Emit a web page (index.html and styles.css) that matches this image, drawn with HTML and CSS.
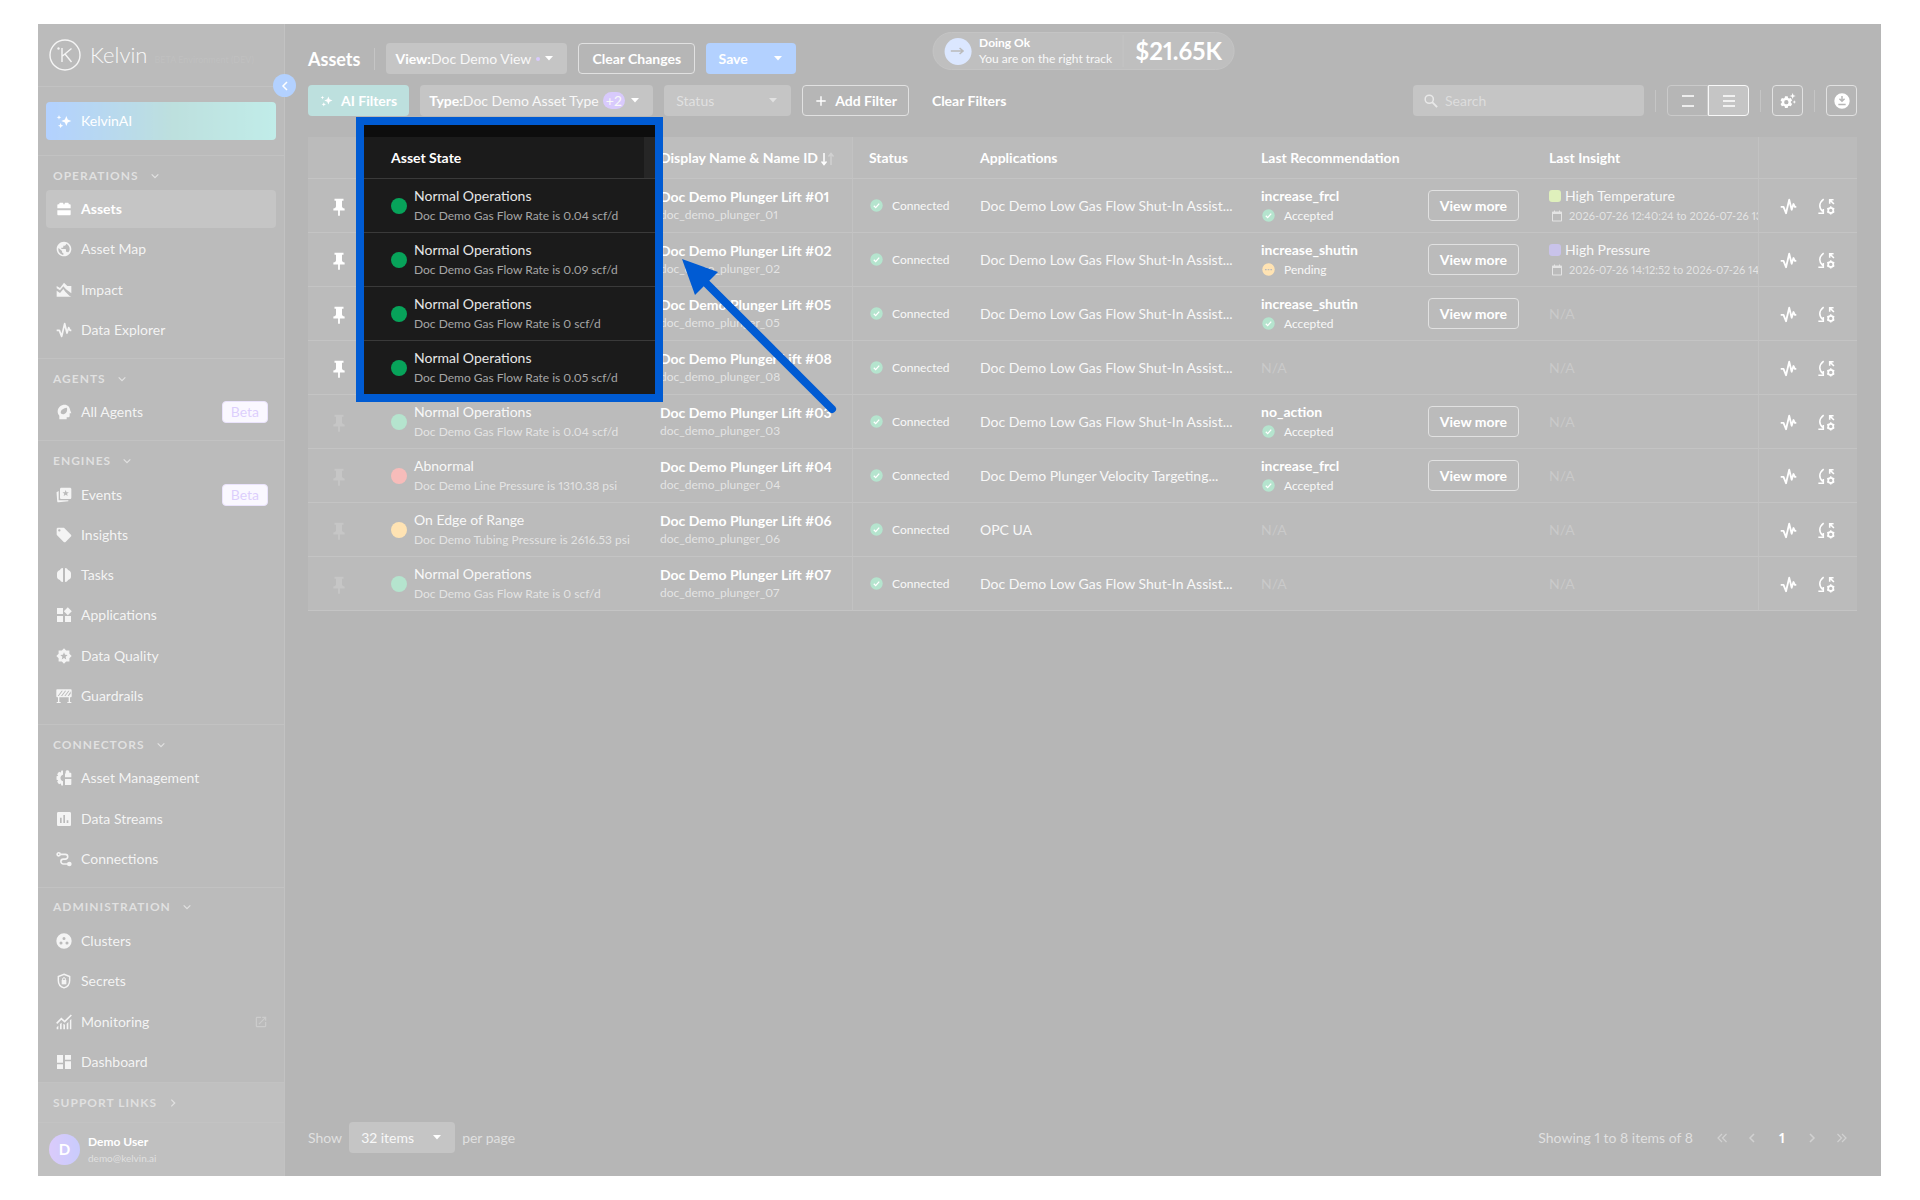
FILE: index.html
```html
<!DOCTYPE html>
<html lang="en">
<head>
    <meta charset="UTF-8">
    <meta name="viewport" content="width=device-width, initial-scale=1.0">
    <title>Kelvin - Assets</title>
    <link rel="stylesheet" href="styles.css">
</head>
<body>
    <svg class="sprite" aria-hidden="true">
        <symbol id="i-sparkle" viewBox="0 0 24 24"><path d="M15.500 4.500l2.100 5.400 5.400 2.100-5.400 2.100-2.100 5.400-2.100-5.400-5.400-2.100 5.400-2.100zM4.500 3l.9 2.600L8 6.500l-2.600.9L4.500 10l-.9-2.600L1 6.500l2.600-.9zM7 15l1.100 2.900L11 19l-2.900 1.100L7 23l-1.100-2.900L3 19l2.900-1.100z"/></symbol>
        <symbol id="i-assets" viewBox="0 0 24 24"><path d="M2 11V6.500C2 5.700 2.700 5 3.500 5H5V3.500c0-.6.400-1 1-1h4c.6 0 1 .4 1 1V5h2V3.500c0-.6.400-1 1-1h4c.6 0 1 .4 1 1V5h1.500c.8 0 1.500.7 1.500 1.500V11zM2 14h20v6c0 .8-.7 1.500-1.500 1.500h-17C2.700 21.500 2 20.800 2 20z"/></symbol>
        <symbol id="i-globe" viewBox="0 0 24 24"><path d="M12 1C5.900 1 1 5.900 1 12s4.900 11 11 11 11-4.900 11-11S18.100 1 12 1zm-1 19.930c-4-.49-7.500-3.850-7.500-8.500 0-.62.130-1.400.3-2L9 15v1c0 1.100.9 2 2 2v2.930zm7-3.540c-.26-.81-1-1.390-2-1.390h-1v-3c0-.55-.45-1-1-1H8v-2h2c.55 0 1-.45 1-1V7h2c1.100 0 2-.9 2-2v-.91c3.200 1.190 5.500 4.060 5.500 7.910 0 2.080-.9 4-2.500 5.390z"/></symbol>
        <symbol id="i-impact" viewBox="0 0 24 24"><path d="M1 6l5 3 6-8 5 5h6v11l-8-6-4-4.500-5 6-5-3z"/><path d="M1 13l5 3.500 5-6 3 4 6.500 6.500 2.500 1H1z"/></symbol>
        <symbol id="i-pulse" viewBox="0 0 24 24"><path d="M1 12.500h4l3.500 9L13 2.500l3.500 14 2.500-8 2 4h2" fill="none" stroke="currentColor" stroke-width="2.600" stroke-linejoin="round"/></symbol>
        <symbol id="i-agent" viewBox="0 0 24 24"><path fill-rule="evenodd" d="M13 1C7.500 1 3 5 2.500 10.500c-.2 3 .9 5.400 2.500 7.300V23h11v-3h2c1.500 0 2.500-1 2.500-2.500V14H23l-1.700-4.500C21 4.500 17.500 1 13 1zm3.500 4.500c.8 4.500-.5 8-4 9.500-2 .9-4 .2-5.200-1.200C6.500 10 9.500 6.500 16.500 5.500z"/></symbol>
        <symbol id="i-events" viewBox="0 0 24 24"><path fill-rule="evenodd" d="M8 1h13c1.100 0 2 .9 2 2v13c0 1.100-.9 2-2 2H8c-1.100 0-2-.9-2-2V3c0-1.100.9-2 2-2zm6.500 3.500l-1.300 3.300-3.500.2 2.700 2.200-.9 3.400 3-1.900 3 1.900-.9-3.400 2.700-2.200-3.500-.2z"/><path d="M4 6v13c0 .6.400 1 1 1h13.500v1.200L4 23c-1.200.1-2-.6-2.200-1.800L.8 8z"/></symbol>
        <symbol id="i-tag" viewBox="0 0 24 24"><path d="M22.400 11.500l-10-10C12 1.200 11.500 1 11 1H3c-1.100 0-2 .9-2 2v8c0 .5.200 1 .6 1.400l10 10c.8.8 2 .8 2.800 0l8-8c.8-.8.8-2.100 0-2.900zM5 6.800A1.800 1.800 0 1 1 5 3.200a1.800 1.800 0 0 1 0 3.600z"/></symbol>
        <symbol id="i-tasks" viewBox="0 0 24 24"><path d="M10.500 1.500v21C8 22.500 6.500 21 6 19.500c-2.500-.7-4.500-2.500-4.500-5V9.500c0-2.500 2-4.300 4.500-5 .5-1.700 2-3 4.500-3zM13.500 1.500v21c2.500 0 4-1.500 4.500-3 2.500-.7 4.500-2.500 4.500-5V9.500c0-2.500-2-4.300-4.500-5-.5-1.700-2-3-4.500-3z"/></symbol>
        <symbol id="i-apps" viewBox="0 0 24 24"><path d="M13.500 13.500v9h9v-9zM1.500 22.500h9v-9h-9zM1.500 1.500v9h9v-9zM17.700.5l-6 6 6 6 6-6z"/></symbol>
        <symbol id="i-quality" viewBox="0 0 24 24"><path fill-rule="evenodd" d="M12 .5l3.200 3.200h4.900v4.900l3.400 3.400-3.400 3.400v4.900h-4.900L12 23.500l-3.200-3.200H3.900v-4.900L.5 12l3.400-3.400V3.700h4.900zm0 6l-1.500 3.800-4 .3 3.100 2.600-1 3.900L12 15l3.400 2.100-1-3.900 3.100-2.600-4-.3z"/></symbol>
        <symbol id="i-guard" viewBox="0 0 24 24"><path fill-rule="evenodd" d="M2 2h20c.8 0 1.500.7 1.500 1.500v9c0 .8-.7 1.500-1.500 1.500h-1v7h2v1.500h-6V21h2v-7H5v7h2v1.500H1V21h2v-7H2c-.8 0-1.500-.7-1.500-1.500v-9C.5 2.700 1.200 2 2 2zm.5 10h1.700l6-8H8.500zm5 0h1.700l6-8h-1.700zm5 0h1.700l6-8h-1.700zm5 0h1.700l2.800-3.500V5z"/></symbol>
        <symbol id="i-mgmt" viewBox="0 0 24 24"><path fill-rule="evenodd" d="M10.500.8v6.400c-2.400.8-3.800 2.600-3.800 4.800s1.400 4 3.800 4.800v6.400H8l-.8-2.800-2.700 1-2.800-3.700 1.600-2.400L.8 14.600V9.400l2.500-.7-1.600-2.400 2.800-3.700 2.700 1L8 .8zM13.500 11V6c0-.6.400-1 1-1V3c0-1.500 1-2.500 2.500-2.500S20 1.500 20 3v1h1.500c.9 0 1.500.7 1.500 1.500V11zM13.500 13.500H23V21c0 .9-.6 1.500-1.500 1.500h-8z"/></symbol>
        <symbol id="i-streams" viewBox="0 0 24 24"><path d="M20.500 1.500h-17c-1.100 0-2 .9-2 2v17c0 1.100.9 2 2 2h17c1.100 0 2-.9 2-2v-17c0-1.100-.9-2-2-2zM8.500 18H6v-8h2.500zm5 0H11V6h2.500zm5 0H16v-4h2.500z"/></symbol>
        <symbol id="i-conn" viewBox="0 0 24 24"><g fill="none" stroke="currentColor" stroke-width="2.400"><circle cx="4" cy="5" r="2.300"/><path d="M6.500 5H14a3.500 3.500 0 0 1 0 7.200h-3a3.500 3.500 0 0 0 0 7.300h7"/></g><circle cx="20" cy="19.500" r="3.500"/></symbol>
        <symbol id="i-clusters" viewBox="0 0 24 24"><path fill-rule="evenodd" d="M12 .5a11.500 11.500 0 1 0 0 23 11.500 11.500 0 0 0 0-23zM12 6a2.300 2.300 0 1 1 0 4.600A2.300 2.300 0 0 1 12 6zm-4.500 6.800a2.300 2.300 0 1 1 0 4.600 2.300 2.300 0 0 1 0-4.600zm9 0a2.300 2.300 0 1 1 0 4.600 2.300 2.300 0 0 1 0-4.600z"/></symbol>
        <symbol id="i-secrets" viewBox="0 0 24 24"><path d="M12 1.800l8.500 3.500v6c0 5.200-3.600 9.700-8.500 11-4.900-1.300-8.500-5.800-8.500-11v-6z" fill="none" stroke="currentColor" stroke-width="2.200"/><path d="M8.500 10.500h7V17h-7z"/><path d="M10 11V9a2 2 0 0 1 4 0v2" fill="none" stroke="currentColor" stroke-width="1.500"/></symbol>
        <symbol id="i-monitor" viewBox="0 0 24 24"><path d="M1 14l7-7 5 4.500L23 1.500" fill="none" stroke="currentColor" stroke-width="2.400"/><path d="M1 20l2.500-2.500V23H1zM6 15l2.500-2v10H6zM11 14.500l2.500 1.500v7H11zM16 14.500l2.500-2.500v11H16zM20.800 9.500L23 7.500V23h-2.200z"/></symbol>
        <symbol id="i-dash" viewBox="0 0 24 24"><path d="M1.500 13h9V1.500h-9zM1.500 22.500h9V15.500h-9zM13.500 22.500h9V11h-9zM13.500 1.500v7h9v-7z"/></symbol>
        <symbol id="i-external" viewBox="0 0 24 24"><path d="M19 19H5V5h7V3H5a2 2 0 0 0-2 2v14a2 2 0 0 0 2 2h14c1.100 0 2-.9 2-2v-7h-2v7zM14 3v2h3.590l-9.830 9.830 1.410 1.410L19 6.410V10h2V3h-7z"/></symbol>
        <symbol id="i-down" viewBox="0 0 24 24"><path d="M4 8l8 8 8-8" fill="none" stroke="currentColor" stroke-width="3"/></symbol>
        <symbol id="i-right" viewBox="0 0 24 24"><path d="M8 4l8 8-8 8" fill="none" stroke="currentColor" stroke-width="3"/></symbol>
        <symbol id="i-left" viewBox="0 0 24 24"><path d="M16 4l-8 8 8 8" fill="none" stroke="currentColor" stroke-width="3"/></symbol>
        <symbol id="i-first" viewBox="0 0 24 24"><path d="M12 4l-8 8 8 8M21 4l-8 8 8 8" fill="none" stroke="currentColor" stroke-width="2.400"/></symbol>
        <symbol id="i-last" viewBox="0 0 24 24"><path d="M3 4l8 8-8 8M12 4l8 8-8 8" fill="none" stroke="currentColor" stroke-width="2.400"/></symbol>
        <symbol id="i-caret" viewBox="0 0 8 5"><path d="M0 0h8L4 4.500z"/></symbol>
        <symbol id="i-plus" viewBox="0 0 24 24"><path d="M12 4v16M4 12h16" fill="none" stroke="currentColor" stroke-width="2.400"/></symbol>
        <symbol id="i-search" viewBox="0 0 24 24"><circle cx="9" cy="9" r="7" fill="none" stroke="currentColor" stroke-width="2.600"/><path d="M14 14l8.500 8.500" stroke="currentColor" stroke-width="3.200"/></symbol>
        <symbol id="i-gear" viewBox="0 0 24 24"><path fill-rule="evenodd" d="M7.500 5h4l.6 2.500 1.600.9 2.500-.8 2 3.500-1.900 1.700v1.900l1.900 1.700-2 3.500-2.500-.8-1.600.9-.6 2.500h-4L6.900 20l-1.600-.9-2.500.8-2-3.500 1.900-1.700v-1.900L.8 11.100l2-3.500 2.500.8 1.600-.9zm2 5.500a3.200 3.200 0 1 0 0 6.500 3.200 3.200 0 0 0 0-6.500zM19 0l1.200 3.300L23.500 4.500l-3.300 1.200L19 9l-1.200-3.300-3.300-1.200 3.300-1.200zM21.500 11l.8 1.700 1.700.8-1.700.8-.8 1.700-.8-1.700-1.700-.8 1.700-.8z"/></symbol>
        <symbol id="i-download" viewBox="0 0 24 24"><path fill-rule="evenodd" d="M12 .5a11.500 11.500 0 1 0 0 23 11.500 11.500 0 0 0 0-23zM10.900 4.500h2.200v5.300l2-2 1.500 1.500L12 13.900 7.400 9.300l1.500-1.500 2 2zM6.500 16h11v2.200h-11z"/></symbol>
        <symbol id="i-pin" viewBox="0 0 16 24"><path d="M2 1h12v2.500h-2V11c0 1.500 1.200 2.500 3.500 3v2.500H9.200V23L8 24.500 6.800 23v-6.500H.5V14C2.800 13.500 4 12.500 4 11V3.500H2z"/></symbol>
        <symbol id="i-check" viewBox="0 0 24 24"><circle cx="12" cy="12" r="11.500"/><path d="M7 12.500l3.500 3.500L17 8.500" fill="none" stroke="#fff" stroke-width="2.400"/></symbol>
        <symbol id="i-pending" viewBox="0 0 24 24"><circle cx="12" cy="12" r="11.500"/><path d="M5.500 11h3v2.600h-3zM10.500 11h3v2.600h-3zM15.500 11h3v2.600h-3z" fill="#1b1b1b"/></symbol>
        <symbol id="i-calendar" viewBox="0 0 24 24"><path fill-rule="evenodd" d="M6 1v2H4c-1.100 0-2 .9-2 2v16c0 1.100.9 2 2 2h16c1.100 0 2-.9 2-2V5c0-1.100-.9-2-2-2h-2V1h-2v2H8V1zM4 8h16v13H4z"/></symbol>
        <symbol id="i-control" viewBox="0 0 24 24"><g fill="none" stroke="currentColor" stroke-width="2.200"><path d="M8 1.500C1 7 1 14 6.500 19M.5 21.500h7v-6M16.500 8V2.500H22M17 3l5.500 5.500"/><circle cx="18" cy="17.500" r="3.600" stroke-width="2.400"/><path d="M18 11.800v2M18 21.200v2M13 14.600l1.700 1M21.300 19.400l1.700 1M13 20.400l1.700-1M21.300 15.600l1.700-1"/></g></symbol>
    </svg>

    <div class="app">
        <aside class="sidebar">
            <div class="brand">
                <svg class="brand-mark" viewBox="0 0 32 32"><g fill="none" stroke="currentColor" stroke-width="1.400"><circle cx="16" cy="16" r="15"/><path d="M13 9v14M22.500 9.500L13.500 17M16 15l6.500 8"/></g><circle cx="9.500" cy="9.500" r="1.200" fill="currentColor"/></svg>
                <span class="brand-name">Kelvin</span>
                <span class="brand-env">BETA Environment (DEV)</span>
            </div>
            <div class="ai-box">
                <button class="ai-button"><svg class="icon"><use href="#i-sparkle"/></svg>KelvinAI</button>
            </div>
            <nav class="nav">
                <section class="nav-group">
                    <button class="nav-title">Operations<svg><use href="#i-down"/></svg></button>
                    <a class="nav-item active" href="#"><svg class="icon"><use href="#i-assets"/></svg>Assets</a>
                    <a class="nav-item" href="#"><svg class="icon"><use href="#i-globe"/></svg>Asset Map</a>
                    <a class="nav-item" href="#"><svg class="icon"><use href="#i-impact"/></svg>Impact</a>
                    <a class="nav-item" href="#"><svg class="icon"><use href="#i-pulse"/></svg>Data Explorer</a>
                </section>
                <section class="nav-group">
                    <button class="nav-title">Agents<svg><use href="#i-down"/></svg></button>
                    <a class="nav-item" href="#"><svg class="icon"><use href="#i-agent"/></svg>All Agents<span class="beta">Beta</span></a>
                </section>
                <section class="nav-group">
                    <button class="nav-title">Engines<svg><use href="#i-down"/></svg></button>
                    <a class="nav-item" href="#"><svg class="icon"><use href="#i-events"/></svg>Events<span class="beta">Beta</span></a>
                    <a class="nav-item" href="#"><svg class="icon"><use href="#i-tag"/></svg>Insights</a>
                    <a class="nav-item" href="#"><svg class="icon"><use href="#i-tasks"/></svg>Tasks</a>
                    <a class="nav-item" href="#"><svg class="icon"><use href="#i-apps"/></svg>Applications</a>
                    <a class="nav-item" href="#"><svg class="icon"><use href="#i-quality"/></svg>Data Quality</a>
                    <a class="nav-item" href="#"><svg class="icon"><use href="#i-guard"/></svg>Guardrails</a>
                </section>
                <section class="nav-group">
                    <button class="nav-title">Connectors<svg><use href="#i-down"/></svg></button>
                    <a class="nav-item" href="#"><svg class="icon"><use href="#i-mgmt"/></svg>Asset Management</a>
                    <a class="nav-item" href="#"><svg class="icon"><use href="#i-streams"/></svg>Data Streams</a>
                    <a class="nav-item" href="#"><svg class="icon"><use href="#i-conn"/></svg>Connections</a>
                </section>
                <section class="nav-group">
                    <button class="nav-title">Administration<svg><use href="#i-down"/></svg></button>
                    <a class="nav-item" href="#"><svg class="icon"><use href="#i-clusters"/></svg>Clusters</a>
                    <a class="nav-item" href="#"><svg class="icon"><use href="#i-secrets"/></svg>Secrets</a>
                    <a class="nav-item" href="#"><svg class="icon"><use href="#i-monitor"/></svg>Monitoring<svg class="external"><use href="#i-external"/></svg></a>
                    <a class="nav-item" href="#"><svg class="icon"><use href="#i-dash"/></svg>Dashboard</a>
                </section>
            </nav>
            <button class="support">Support Links<svg><use href="#i-right"/></svg></button>
            <div class="user">
                <span class="avatar">D</span>
                <div>
                    <div class="user-name">Demo User</div>
                    <div class="user-mail">demo@kelvin.ai</div>
                </div>
            </div>
            <button class="collapse" aria-label="Collapse sidebar"><svg><use href="#i-left"/></svg></button>
        </aside>

        <main class="main">
            <header class="bar">
                <h1>Assets</h1>
                <span class="divider"></span>
                <div class="field view-field">
                    <label for="view">View:</label>
                    <select id="view"><option>Doc Demo View</option></select>
                    <span class="unsaved"></span>
                    <svg class="caret"><use href="#i-caret"/></svg>
                </div>
                <button class="btn">Clear Changes</button>
                <div class="save">
                    <button>Save</button>
                    <button aria-label="More save options"><svg class="caret"><use href="#i-caret"/></svg></button>
                </div>
            </header>

            <div class="bar filters">
                <button class="ai-filters"><svg class="icon"><use href="#i-sparkle"/></svg>AI Filters</button>
                <div class="field type-field">
                    <label for="type">Type:</label>
                    <select id="type"><option>Doc Demo Asset Type</option></select>
                    <span class="count">+2</span>
                    <svg class="caret"><use href="#i-caret"/></svg>
                </div>
                <div class="field status-field">
                    <select aria-label="Status"><option>Status</option></select>
                    <svg class="caret"><use href="#i-caret"/></svg>
                </div>
                <button class="btn add-filter"><svg><use href="#i-plus"/></svg>Add Filter</button>
                <button class="clear-filters">Clear Filters</button>
                <div class="search">
                    <svg><use href="#i-search"/></svg>
                    <input type="search" placeholder="Search" aria-label="Search">
                </div>
                <span class="divider"></span>
                <div class="density">
                    <button aria-label="Comfortable rows"><svg viewBox="0 0 12 12"><path d="M0 1h12M0 11h12"/></svg></button>
                    <button class="on" aria-label="Compact rows"><svg viewBox="0 0 12 12"><path d="M0 1h12M0 6h12M0 11h12"/></svg></button>
                </div>
                <span class="divider"></span>
                <button class="btn square" aria-label="Table settings"><svg class="icon"><use href="#i-gear"/></svg></button>
                <span class="divider"></span>
                <button class="btn square" aria-label="Download"><svg class="icon"><use href="#i-download"/></svg></button>
            </div>

            <table class="assets">
                <colgroup>
                    <col class="c-pin"><col class="c-state"><col class="c-name"><col class="c-status">
                    <col class="c-apps"><col class="c-rec"><col class="c-insight"><col class="c-actions">
                </colgroup>
                <thead>
                    <tr>
                        <th></th>
                        <th>Asset State</th>
                        <th class="sorted">Display Name &amp; Name ID <svg viewBox="0 0 14 14"><path d="M3 1v11M.5 9.500L3 12.500l2.500-3"/><path class="dim" d="M10 13V2M7.500 4.500L10 1.500l2.500 3"/></svg></th>
                        <th>Status</th>
                        <th>Applications</th>
                        <th>Last Recommendation</th>
                        <th>Last Insight</th>
                        <th class="actions"></th>
                    </tr>
                </thead>
                <tbody id="rows"></tbody>
            </table>

            <footer class="pager">
                <label for="size">Show</label>
                <div class="field size-field">
                    <select id="size"><option>32 items</option></select>
                    <svg class="caret"><use href="#i-caret"/></svg>
                </div>
                <span>per page</span>
                <span class="range">Showing 1 to 8 items of 8</span>
                <div class="pages">
                    <button aria-label="First page"><svg><use href="#i-first"/></svg></button>
                    <button aria-label="Previous page"><svg><use href="#i-left"/></svg></button>
                    <button class="current">1</button>
                    <button aria-label="Next page"><svg><use href="#i-right"/></svg></button>
                    <button aria-label="Last page"><svg><use href="#i-last"/></svg></button>
                </div>
            </footer>
        </main>

        <div class="score">
            <span class="score-icon"><svg viewBox="0 0 14 8"><path d="M0 4h12M9 1l3.500 3L9 7"/></svg></span>
            <div class="score-text">
                <strong>Doing Ok</strong>
                <span>You are on the right track</span>
            </div>
            <span class="score-value">$21.65K</span>
        </div>

        <!-- dims everything except the Asset State column -->
        <div class="spotlight"></div>
        <svg class="pointer" viewBox="0 0 160 160"><path d="M152 152L24 24" stroke="#005bd3" stroke-width="8" stroke-linecap="round"/><path d="M2 2l36 13-23 23z" fill="#005bd3"/></svg>
    </div>

    <script>
        const lowGas = 'Doc Demo Low Gas Flow Shut-In Assist...';
        const assets = [
            { id: '01', pinned: true, color: 'green', state: 'Normal Operations', detail: 'Doc Demo Gas Flow Rate is 0.04 scf/d', app: lowGas, rec: 'increase_frcl', recState: 'Accepted', insight: 'High Temperature', tone: 'lime', time: '2026-07-26 12:40:24 to 2026-07-26 13:40:24' },
            { id: '02', pinned: true, color: 'green', state: 'Normal Operations', detail: 'Doc Demo Gas Flow Rate is 0.09 scf/d', app: lowGas, rec: 'increase_shutin', recState: 'Pending', insight: 'High Pressure', tone: 'violet', time: '2026-07-26 14:12:52 to 2026-07-26 14:42:52' },
            { id: '05', pinned: true, color: 'green', state: 'Normal Operations', detail: 'Doc Demo Gas Flow Rate is 0 scf/d', app: lowGas, rec: 'increase_shutin', recState: 'Accepted' },
            { id: '08', pinned: true, color: 'green', state: 'Normal Operations', detail: 'Doc Demo Gas Flow Rate is 0.05 scf/d', app: lowGas },
            { id: '03', color: 'green', state: 'Normal Operations', detail: 'Doc Demo Gas Flow Rate is 0.04 scf/d', app: lowGas, rec: 'no_action', recState: 'Accepted' },
            { id: '04', color: 'red', state: 'Abnormal', detail: 'Doc Demo Line Pressure is 1310.38 psi', app: 'Doc Demo Plunger Velocity Targeting...', rec: 'increase_frcl', recState: 'Accepted' },
            { id: '06', color: 'amber', state: 'On Edge of Range', detail: 'Doc Demo Tubing Pressure is 2616.53 psi', app: 'OPC UA' },
            { id: '07', color: 'green', state: 'Normal Operations', detail: 'Doc Demo Gas Flow Rate is 0 scf/d', app: lowGas }
        ];
        const na = '<span class="na">N/A</span>';

        document.getElementById('rows').innerHTML = assets.map(a => `<tr>
            <td class="pin"><button class="${a.pinned ? 'pinned' : ''}" aria-label="Pin asset"><svg><use href="#i-pin"/></svg></button></td>
            <td><div class="state"><span class="dot ${a.color}"></span><div><div>${a.state}</div><small>${a.detail}</small></div></div></td>
            <td class="name"><strong>Doc Demo Plunger Lift #${a.id}</strong><small>doc_demo_plunger_${a.id}</small></td>
            <td><div class="tagline"><svg class="ok"><use href="#i-check"/></svg>Connected</div></td>
            <td>${a.app}</td>
            <td>${a.rec ? `<div class="rec"><div><strong>${a.rec}</strong><div class="tagline">${a.recState === 'Pending'
                ? '<svg class="wait"><use href="#i-pending"/></svg>'
                : '<svg class="ok"><use href="#i-check"/></svg>'}${a.recState}</div></div><button class="btn">View more</button></div>` : na}</td>
            <td class="insight">${a.insight ? `<div class="insight-name"><span class="swatch ${a.tone}"></span>${a.insight}</div><div class="insight-time"><svg><use href="#i-calendar"/></svg>${a.time}</div>` : na}</td>
            <td class="actions"><button aria-label="Open in Data Explorer"><svg><use href="#i-pulse"/></svg></button><button aria-label="Control changes"><svg><use href="#i-control"/></svg></button></td>
        </tr>`).join('');
    </script>
</body>
</html>
```
FILE: styles.css
```css
* {
    box-sizing: border-box;
}
body {
    margin: 0;
    padding: 24px 39px 24px 38px;
    height: 100vh;
    background: #fff;
    color: #e6e6e6;
    font-family: Lato, 'Liberation Sans', sans-serif;
    font-size: 14px;
    line-height: 20px;
    font-variant-numeric: proportional-nums;
}
button, input, select {
    font: inherit;
    color: inherit;
    background: none;
    border: 0;
    padding: 0;
    margin: 0;
}
button, select {
    cursor: pointer;
}
svg {
    display: block;
    flex: none;
    fill: currentColor;
}
.sprite {
    display: none;
}
.icon {
    width: 16px;
    height: 16px;
}
.app {
    position: relative;
    display: flex;
    height: 100%;
    overflow: hidden;
    background: #0d0d0d;
}

/* sidebar */
.sidebar {
    position: relative;
    display: flex;
    flex-direction: column;
    flex: none;
    width: 247px;
    background: #1b1b1b;
    border-right: 1px solid #333;
}
.brand {
    display: flex;
    align-items: center;
    height: 62px;
    padding: 0 11px;
}
.brand-mark {
    width: 32px;
    height: 32px;
    color: #ddd;
}
.brand-name {
    margin-left: 9px;
    font-size: 22px;
    font-weight: 300;
    line-height: 32px;
}
.brand-env {
    margin-left: 7px;
    padding-top: 10px;
    font-size: 9px;
    white-space: nowrap;
    color: #2c2c2c;
}
.ai-box {
    padding: 15px 8px;
    border-top: 1px solid #333;
}
.ai-button {
    display: flex;
    align-items: center;
    gap: 9px;
    width: 100%;
    height: 38px;
    padding: 0 10px;
    border-radius: 4px;
    color: #fff;
    background: linear-gradient(to right, #06f, #239690 55%, #2fc0b4);
}
.nav {
    display: flex;
    flex-direction: column;
    flex: 1;
}
.nav-group {
    display: contents;
}
.nav-title, .support {
    display: flex;
    align-items: center;
    gap: 11px;
    flex: none;
    height: 34px;
    padding: 6px 15px 0;
    border-top: 1px solid #333;
    font-size: 12px;
    font-weight: 700;
    letter-spacing: 1px;
    text-transform: uppercase;
    color: #999;
}
.nav-title svg, .support svg {
    width: 10px;
    height: 10px;
}
.nav-group + .nav-group .nav-title {
    margin-top: 8px;
}
.nav-item {
    display: flex;
    align-items: center;
    gap: 9px;
    flex: 1;
    margin: 1px 8px;
    padding: 0 8px 0 10px;
    border-radius: 4px;
    color: #d9d9d9;
    text-decoration: none;
}
.nav-item.active {
    background: #3d3d3d;
    color: #fff;
    font-weight: 700;
}
.beta {
    margin-left: auto;
    padding: 0 8px;
    border: 1px solid #b9a2f5;
    border-radius: 4px;
    background: #eee6ff;
    color: #8a5cf5;
}
.external {
    width: 14px;
    height: 14px;
    margin-left: auto;
    color: #555;
}
.support {
    height: 40px;
    padding-top: 0;
    background: #2d2d2d;
}
.user {
    display: flex;
    align-items: center;
    gap: 8px;
    height: 54px;
    padding: 0 11px;
    background: #2d2d2d;
    border-top: 1px solid #383838;
    font-size: 12px;
    line-height: 16px;
}
.avatar {
    width: 31px;
    border-radius: 50%;
    background: linear-gradient(to right, #8450f0, #4a50f5);
    color: #fff;
    font-size: 15px;
    font-weight: 700;
    line-height: 31px;
    text-align: center;
}
.user-name {
    color: #fff;
    font-weight: 700;
}
.user-mail {
    color: #999;
    font-size: 10px;
}
.collapse {
    position: absolute;
    z-index: 1;
    top: 50px;
    right: -12px;
    display: grid;
    place-items: center;
    width: 23px;
    height: 23px;
    border-radius: 50%;
    background: #06f;
    color: #fff;
}
.collapse svg {
    width: 12px;
    height: 12px;
}

/* main area */
.main {
    display: flex;
    flex-direction: column;
    flex: 1;
    min-width: 0;
    padding: 19px 24px 23px 23px;
}
.bar {
    display: flex;
    align-items: center;
    gap: 11px;
    height: 31px;
}
.filters {
    margin-top: 11px;
}
h1 {
    margin: 0;
    color: #fff;
    font-size: 18px;
    line-height: 24px;
}
.divider {
    width: 1px;
    height: 22px;
    background: #3d3d3d;
}
h1 + .divider {
    margin-left: 3px;
}
.field {
    display: flex;
    align-items: center;
    height: 31px;
    padding: 0 14px 0 9px;
    border-radius: 4px;
    background: #3d3d3d;
}
.field label {
    color: #fff;
    font-weight: 700;
}
.field select {
    appearance: none;
    color: #e6e6e6;
}
.caret {
    width: 8px;
    height: 5px;
    margin-left: auto;
    color: #fff;
    pointer-events: none;
}
.view-field {
    width: 181px;
}
.type-field {
    width: 233px;
}
.status-field {
    width: 127px;
    padding-left: 12px;
}
.status-field select, .status-field .caret {
    color: #999;
}
.unsaved {
    width: 4px;
    height: 4px;
    margin-left: 4px;
    border-radius: 50%;
    background: #7d4df5;
}
.count {
    margin-left: 3px;
    padding: 0 3px;
    border-radius: 10px;
    background: #7d4df5;
    line-height: 17px;
}
.btn {
    height: 31px;
    padding: 0 11px;
    border: 1px solid #999;
    border-radius: 4px;
    color: #fff;
    font-weight: 700;
    white-space: nowrap;
}
.bar > .btn {
    padding: 0 13px;
}
.save {
    display: flex;
    width: 90px;
    height: 31px;
    border-radius: 4px;
    background: #06f;
    color: #fff;
    font-weight: 700;
}
.save button:first-child {
    flex: 1;
}
.save button:last-child {
    width: 36px;
}
.save .caret {
    margin: 0 auto;
}
.ai-filters {
    display: flex;
    align-items: center;
    gap: 8px;
    height: 31px;
    padding: 0 12px;
    border-radius: 4px;
    background: #239690;
    color: #fff;
    font-weight: 700;
}
.ai-filters .icon {
    width: 13px;
    height: 13px;
}
.bar > .add-filter {
    display: flex;
    align-items: center;
    gap: 7px;
    padding: 0 11px;
}
.add-filter svg {
    width: 14px;
    height: 14px;
}
.clear-filters {
    margin-left: 12px;
    color: #fff;
    font-weight: 700;
}
.search {
    display: flex;
    align-items: center;
    gap: 7px;
    width: 231px;
    height: 31px;
    margin-left: auto;
    padding: 0 11px;
    border-radius: 4px;
    background: #3d3d3d;
    color: #b3b3b3;
}
.search svg {
    width: 14px;
    height: 14px;
}
.search input {
    flex: 1;
    min-width: 0;
    outline: 0;
}
.search input::placeholder {
    color: #8c8c8c;
}
.density {
    display: flex;
}
.density button {
    display: grid;
    place-items: center;
    width: 41px;
    height: 31px;
    border: 1px solid #4d4d4d;
    border-radius: 4px 0 0 4px;
}
.density .on {
    border-color: #e6e6e6;
    border-radius: 0 4px 4px 0;
    background: #3d3d3d;
}
.density svg {
    width: 12px;
    height: 12px;
    stroke: #fff;
    stroke-width: 1.500;
}
.bar > .square {
    display: grid;
    place-items: center;
    width: 31px;
    padding: 0;
}

/* score pill over the top of the page */
.score {
    position: absolute;
    top: 8px;
    left: calc(50% + 124px);
    transform: translateX(-50%);
    display: flex;
    align-items: center;
    height: 38px;
    padding: 0 12px 0 11px;
    border: 1px solid #3a3a3a;
    border-radius: 19px;
    background: #2a2a2a;
    white-space: nowrap;
}
.score-icon {
    display: grid;
    place-items: center;
    width: 27px;
    height: 27px;
    border-radius: 50%;
    background: #87afff;
}
.score-icon svg {
    width: 14px;
    height: 8px;
    fill: none;
    stroke: #1b1b1b;
    stroke-width: 1.500;
}
.score-text {
    display: flex;
    flex-direction: column;
    padding: 0 10px 0 8px;
    border-right: 1px solid #3a3a3a;
    font-size: 12px;
    line-height: 16px;
}
.score-text strong {
    color: #fff;
}
.score-value {
    padding-left: 12px;
    color: #fff;
    font-size: 24px;
    font-weight: 700;
}

/* asset table */
.assets {
    width: 100%;
    margin-top: 21px;
    border-collapse: separate;
    border-spacing: 0;
    table-layout: fixed;
    background: #1b1b1b;
}
.c-pin { width: 67px; }
.c-state { width: 269px; }
.c-name { width: 209px; }
.c-status { width: 111px; }
.c-apps { width: 281px; }
.c-rec { width: 288px; }
.c-insight { width: 225px; }
.c-actions { width: 99px; }
.assets th, .assets td {
    padding: 0 0 0 16px;
    border-bottom: 1px solid #3a3a3a;
    text-align: left;
    white-space: nowrap;
}
.assets th {
    height: 42px;
    color: #fff;
}
.assets td {
    height: 54px;
}
.assets small {
    display: block;
    font-size: 12px;
    color: #a6a6a6;
}
.assets strong {
    display: block;
    color: #fff;
}
.assets th:nth-child(3), .assets td:nth-child(3) {
    border-right: 1px solid #333;
}
.assets .sorted {
    background: #262626;
}
.sorted svg {
    display: inline-block;
    width: 14px;
    height: 14px;
    vertical-align: middle;
    fill: none;
    stroke: #fff;
    stroke-width: 1.500;
}
.sorted .dim {
    stroke: #666;
}
.assets .pin {
    padding: 0 5px 0 0;
    text-align: center;
}
.pin button {
    vertical-align: middle;
    color: #424242;
}
.pin .pinned {
    color: #fff;
}
.pin svg {
    width: 12px;
    height: 18px;
}
.state {
    display: flex;
    align-items: center;
    gap: 7px;
}
.dot {
    width: 16px;
    height: 16px;
    border-radius: 50%;
}
.green {
    background: #07a35a;
}
.red {
    background: #e41f18;
}
.amber {
    background: #fda200;
}
.name strong, .name small {
    line-height: 18px;
}
.tagline {
    display: flex;
    align-items: center;
    gap: 9px;
    padding-left: 1px;
    font-size: 12px;
}
.tagline svg {
    width: 13px;
    height: 13px;
}
.ok {
    color: #07a35a;
}
.wait {
    color: #fda200;
}
.rec {
    display: flex;
    align-items: center;
    justify-content: space-between;
    padding-right: 14px;
}
.na {
    color: #4d4d4d;
}
.assets .insight {
    overflow: hidden;
}
.insight-name, .insight-time {
    display: flex;
    align-items: center;
    gap: 4px;
}
.insight-time {
    gap: 6px;
    padding-left: 2px;
    font-size: 11px;
    color: #a6a6a6;
}
.insight-time svg {
    width: 12px;
    height: 12px;
}
.swatch {
    width: 12px;
    height: 12px;
    border-radius: 3px;
}
.lime {
    background: #93cb1f;
}
.violet {
    background: #4a36b8;
}
.assets .actions {
    padding-left: 21px;
    border-left: 1px solid #333;
}
.actions button {
    margin-right: 21px;
    vertical-align: middle;
    color: #fff;
}
.actions button:last-child {
    margin-right: 0;
}
.actions svg {
    width: 17px;
    height: 17px;
}

/* pagination */
.pager {
    display: flex;
    align-items: center;
    gap: 7px;
    margin-top: auto;
    color: #999;
}
.size-field {
    width: 106px;
    padding: 0 14px 0 12px;
}
.range {
    margin-left: auto;
}
.pages {
    display: flex;
    align-items: center;
    margin-left: 7px;
}
.pages button {
    display: grid;
    place-items: center;
    width: 30px;
    height: 30px;
    color: #666;
}
.pages svg {
    width: 12px;
    height: 12px;
}
.pages .current {
    color: #fff;
    font-weight: 700;
}

/* highlight */
.spotlight {
    position: absolute;
    z-index: 2;
    top: 93px;
    left: 318px;
    width: 307px;
    height: 285px;
    border: 8px solid #005bd3;
    box-shadow: 0 0 0 2000px rgba(255, 255, 255, 0.7);
    pointer-events: none;
}
.pointer {
    position: absolute;
    z-index: 3;
    top: 233px;
    left: 642px;
    width: 160px;
    height: 160px;
    pointer-events: none;
}
```
